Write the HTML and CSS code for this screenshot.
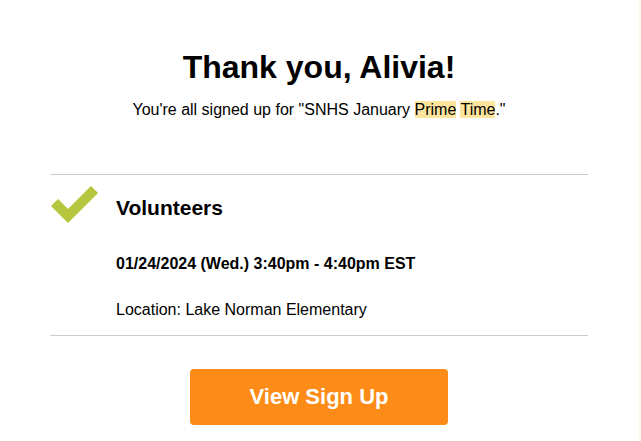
FILE: index.html
```html
<!DOCTYPE html>
<html lang="en">
<head>
<meta charset="utf-8">
<title>Thank you</title>
<link rel="stylesheet" href="styles.css">
</head>
<body>
<div class="shell">
  <main class="page">
    <div class="content">
      <h1 class="title">Thank you, Alivia!</h1>
      <p class="subtitle">You're all signed up for "SNHS January <mark class="hl">Prime</mark> <mark class="hl">Time</mark>."</p>
      <section class="slot">
        <svg class="check" width="50" height="40" viewBox="0 0 50 40" aria-hidden="true">
          <polyline points="4.5,17.5 18,31 44.5,4.5" fill="none" stroke="#b5c63c" stroke-width="10" stroke-linejoin="miter" stroke-linecap="butt"/>
        </svg>
        <div class="slot-info">
          <h2 class="slot-name">Volunteers</h2>
          <p class="slot-date">01/24/2024 (Wed.) 3:40pm - 4:40pm EST</p>
          <p class="slot-loc">Location: Lake Norman Elementary</p>
        </div>
      </section>
      <a class="btn" href="#">View Sign Up</a>
    </div>
  </main>
  <div class="edge"></div>
</div>
</body>
</html>
```

FILE: styles.css
```css
html, body {
  margin: 0;
  padding: 0;
  background: #ffffff;
}
body {
  font-family: "Liberation Sans", Arial, sans-serif;
  color: #000000;
}
.shell {
  display: flex;
  min-height: 441px;
}
.page {
  flex: 1;
  padding-right: 1px;
}
.edge {
  width: 2px;
  background: #fff7ea;
}
.content {
  width: 538px;
  margin: 0 auto;
}
.title {
  margin: 49px 0 0;
  font-size: 32px;
  line-height: 36px;
  font-weight: bold;
  text-align: center;
}
.subtitle {
  margin: 16px 0 0;
  font-size: 16px;
  line-height: 18px;
  text-align: center;
}
.hl {
  background: #fee59c;
  color: inherit;
}
.slot {
  margin-top: 55px;
  border-top: 1px solid #cccccc;
  border-bottom: 1px solid #cccccc;
  padding: 10px 0 16px;
  display: flex;
  align-items: flex-start;
}
.check {
  display: block;
  flex: 0 0 auto;
  margin-right: 16px;
}
.slot-info {
  padding-top: 11px;
}
.slot-name {
  margin: 0;
  font-size: 21px;
  line-height: 24px;
  font-weight: bold;
}
.slot-date {
  margin: 35px 0 0;
  font-size: 16px;
  line-height: 18px;
  font-weight: bold;
}
.slot-loc {
  margin: 28px 0 0;
  font-size: 16px;
  line-height: 18px;
}
.btn {
  display: flex;
  align-items: center;
  justify-content: center;
  width: 258px;
  height: 56px;
  margin: 33px auto 0;
  background: #fc8c17;
  border-radius: 4px;
  color: #ffffff;
  font-size: 22px;
  font-weight: bold;
  text-decoration: none;
}
```
